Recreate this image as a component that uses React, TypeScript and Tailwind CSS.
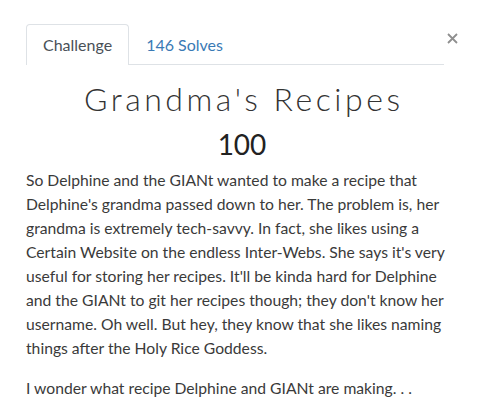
export default function App() {
  return (
    <div className="w-[482px] h-[414px] bg-white pl-[26px] pt-[24px]" style={{ fontFamily: "Lato, 'Noto Sans', sans-serif" }}>
      <div className="w-[432px]">
        <div className="flex items-start">
          <div className="flex flex-1 border-b border-[#dee2e6] h-[41px]">
            <div className="h-[41px] px-[16px] border border-b-0 border-[#dee2e6] rounded-t-[4px] bg-white text-[16px] leading-[24px] py-[8px] text-[#495057]">
              Challenge
            </div>
            <div className="h-[41px] px-[17px] py-[9px] text-[16px] leading-[24px] text-[#3a7ab5]">
              146 Solves
            </div>
          </div>
          <div className="w-[14px] flex justify-end pt-[9px]">
            <svg width="11" height="11" viewBox="0 0 11 11">
              <path d="M1 1L10 10M10 1L1 10" stroke="#8f8f8f" strokeWidth="1.8" />
            </svg>
          </div>
        </div>
        <h2 className="mt-[15px] pl-[0.11em] text-center text-[32px] leading-[38px] font-light tracking-[0.11em] text-[#333]">
          Grandma's Recipes
        </h2>
        <h3 className="mt-[9px] text-center text-[28px] leading-[34px] text-[#222]">100</h3>
        <div className="mt-[7px] text-[15.7px] leading-[24px] text-[#3a3a3a]">
          <p>
            So Delphine and the GIANt wanted to make a recipe that Delphine's grandma passed down to her. The problem is, her grandma is extremely tech-savvy. In fact, she likes using a Certain Website on the endless Inter-Webs. She says it's very useful for storing her recipes. It'll be kinda hard for Delphine and the GIANt to git her recipes though; they don't know her username. Oh well. But hey, they know that she likes naming things after the Holy Rice Goddess.
          </p>
          <p className="mt-[16px]">I wonder what recipe Delphine and GIANt are making. . .</p>
        </div>
      </div>
    </div>
  );
}
